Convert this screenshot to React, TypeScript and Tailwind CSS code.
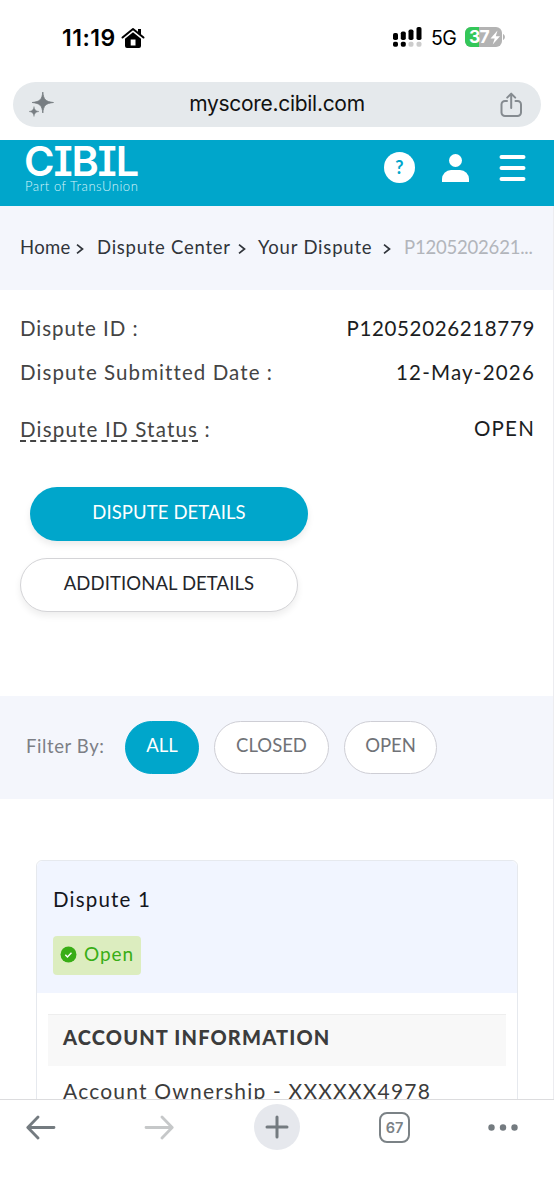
import React, { useState } from 'react';

const BREADCRUMBS = [
  { label: 'Home', className: 'w-[50px] tracking-[0.3px]', gap: 'ml-1.5 mr-[13px]' },
  { label: 'Dispute Center', className: 'w-[135px] tracking-[0.75px]', gap: 'ml-1.5 mr-3' },
  { label: 'Your Dispute', className: 'w-[115px] tracking-[0.8px]', gap: 'ml-2.5 mr-[13px]' },
];

const FILTERS = [
  { id: 'all', label: 'ALL', width: 'w-[74px]' },
  { id: 'closed', label: 'CLOSED', width: 'w-[115px]' },
  { id: 'open', label: 'OPEN', width: 'w-[93px]' },
];

function StatusBar() {
  return (
    <div className="flex h-[82px] shrink-0 items-start pt-[25px] pl-[62px] font-['Inter','Liberation_Sans',sans-serif] text-black">
      <span className="w-[54px] text-[23px] leading-[26px] font-semibold tracking-[0.5px] whitespace-nowrap">11:19</span>
      <svg className="mt-[2px] ml-[5px]" width="24" height="22" viewBox="0 0 24 22">
        <path d="M1.5 10.5 12 2l10.5 8.5" fill="none" stroke="#000" strokeWidth="2" strokeLinecap="round" strokeLinejoin="round" />
        <path d="M17 2h3v6l-3-2.6z" />
        <path fillRule="evenodd" d="M4 11.800 12 5.300l8 6.500V19a2 2 0 0 1-2 2H6a2 2 0 0 1-2-2zM9.700 12.500v6h4.800v-6z" />
      </svg>
      <svg className="mt-[2px] ml-[248px]" width="29" height="21" viewBox="0 0 29 21">
        <rect x="0" y="6" width="5" height="7" rx="1.800" />
        <rect x="7.800" y="4.500" width="5" height="8.500" rx="1.800" />
        <rect x="15.500" y="2.500" width="5" height="10.500" rx="1.800" />
        <rect x="23.500" y="0" width="5" height="13" rx="1.800" />
        <rect x="0" y="14.800" width="5" height="5" rx="1.700" />
        <rect x="7.800" y="14.800" width="5" height="5" rx="1.700" />
        <rect x="15.500" y="14.800" width="5" height="5" rx="1.700" fill="#ccc" />
        <rect x="23.500" y="14.800" width="5" height="5" rx="1.700" fill="#ccc" />
      </svg>
      <span className="ml-[9px] w-[27px] text-[19.5px] leading-[27px] tracking-[-0.600px]">5G</span>
      <svg className="mt-[2px] ml-[7px]" width="41" height="21" viewBox="0 0 41 21">
        <clipPath id="battery">
          <rect width="37" height="20" rx="6" />
        </clipPath>
        <g clipPath="url(#battery)">
          <rect width="37" height="20" fill="#b3b3b3" />
          <rect width="14" height="20" fill="#34c759" />
        </g>
        <path d="M38 7c2.500.7 2.500 5.300 0 6z" fill="#b3b3b3" />
        <text x="4" y="16.300" fontSize="17.500" fontWeight="700" fill="#fff" letterSpacing="-0.8">37</text>
        <path d="m32.500 3.500-7 8h4.200l-2 6 7.300-8.200h-4.200z" fill="#fff" />
      </svg>
    </div>
  );
}

function AddressBar() {
  return (
    <div className="mx-[13px] flex h-[45px] shrink-0 items-center rounded-full bg-[#e5e9ec] pr-[18px] pl-4">
      <svg width="25" height="25" viewBox="0 0 25 25" fill="#777d82">
        <path d="M13.800 0c.8 7.600 2.800 9.600 10.700 10.500-7.900.9-9.900 2.900-10.700 10.500-.8-7.600-2.800-9.600-10.700-10.500C11 9.600 13 7.600 13.800 0z" stroke="#777d82" strokeWidth=".8" />
        <path d="M5 14.500c.5 3.300 1.500 4.300 5 5-3.500.7-4.500 1.700-5 5-.5-3.300-1.500-4.300-5-5 3.500-.7 4.500-1.700 5-5z" stroke="#777d82" strokeWidth=".4" />
      </svg>
      <span className="flex-1 pb-px text-center font-['Inter','Liberation_Sans',sans-serif] text-[21px] leading-[28px] tracking-[-0.3px] text-[#111]">
        myscore.cibil.com
      </span>
      <svg width="23" height="26" viewBox="0 0 23 26" fill="none" stroke="#858b90" strokeWidth="2" strokeLinecap="round" strokeLinejoin="round">
        <path d="M7 9H5a3.500 3.500 0 0 0-3.500 3.500v8A3.500 3.500 0 0 0 5 24h12.500a3.500 3.500 0 0 0 3.500-3.500v-8A3.500 3.500 0 0 0 17.500 9h-2" />
        <path d="M11.200 16V1.800M7.200 5.600l4-4 4 4" />
      </svg>
    </div>
  );
}

function SiteHeader() {
  return (
    <header className="mt-[13px] flex h-[66px] shrink-0 items-start bg-[#00a6cb] pl-[25px] text-white">
      <div className="w-[114px] whitespace-nowrap">
        <div className="mt-[3px] -ml-px h-[37px] font-['Inter',sans-serif] text-[41.500px] leading-[37px] font-semibold tracking-[-1.200px] [font-feature-settings:'cv08']">
          CIBIL
        </div>
        <div className="text-[13px] leading-[13px] font-light tracking-[0.550px] text-[#d9f5fb]">Part of TransUnion</div>
      </div>
      <div className="mt-[12px] ml-[245px] flex h-[31px] w-[31px] items-center justify-center rounded-full bg-white text-[18px] font-bold text-[#00a6cb]">
        ?
      </div>
      <svg className="mt-[14px] ml-[27px]" width="27" height="28" viewBox="0 0 27 28" fill="#fff">
        <circle cx="13.500" cy="6.500" r="6.500" />
        <path d="M0 28v-3a9 9 0 0 1 9-9h9a9 9 0 0 1 9 9v3z" />
      </svg>
      <svg className="mt-[14px] ml-[30px]" width="27" height="28" viewBox="0 0 27 28" stroke="#fff" strokeWidth="4" strokeLinecap="round">
        <path d="M2.500 3h22M2.500 14h22M2.500 25h22" />
      </svg>
    </header>
  );
}

function Chevron({ className }: { className: string }) {
  return (
    <svg className={`mt-[2px] shrink-0 ${className}`} width="8" height="10" viewBox="0 0 8 10" fill="none" stroke="#30343a" strokeWidth="1.700">
      <path d="m1 .7 5.500 4.300L1 9.300" />
    </svg>
  );
}

function DisputeCard() {
  return (
    <section className="mx-9 mr-[35px] mt-[61px] h-[260px] rounded-t-md border border-[#e6e9ee]">
      <div className="h-[132px] rounded-t-md bg-[#f1f5ff] pt-[24px] pl-4">
        <h2 className="text-[20.500px] leading-[28px] tracking-[1.200px] text-[#14161d]">Dispute 1</h2>
        <div className="mt-[23px] flex h-[39px] w-[88px] items-center rounded bg-[#dcedbf] pl-[7px] text-[#38ad16]">
          <svg className="-mt-[2px]" width="17" height="17" viewBox="0 0 16 16">
            <circle cx="8" cy="8" r="7.500" fill="#38ad16" />
            <path d="m5 8.300 2 2 3.800-4" fill="none" stroke="#fff" strokeWidth="1.300" />
          </svg>
          <span className="ml-[7px] pb-[3px] text-[19px] leading-[26px] tracking-[0.900px]">Open</span>
        </div>
      </div>
      <div className="px-[11px] pt-[21px]">
        <h3 className="h-[52px] border-t border-[#eee] bg-[#f8f8f8] pl-[15px] text-[20px] leading-[44px] font-black tracking-[1.150px] text-[#3c3c3c]">
          ACCOUNT INFORMATION
        </h3>
        <p className="pt-[12px] pl-[15px] text-[21px] leading-[26px] tracking-[1.200px] text-[#3c3c3c]">
          Account Ownership - XXXXXX4978
        </p>
      </div>
    </section>
  );
}

function BrowserToolbar() {
  return (
    <nav className="flex h-[101px] shrink-0 items-start border-t border-[#dcdcde] bg-white pt-[4px] pl-[26px]">
      <svg className="mt-[11px]" width="30" height="25" viewBox="0 0 30 25" fill="none" stroke="#747b80" strokeWidth="2.800" strokeLinecap="round" strokeLinejoin="round">
        <path d="M28 12.500H2M12 2 1.800 12.500 12 23" />
      </svg>
      <svg className="mt-[11px] ml-[88px]" width="30" height="25" viewBox="0 0 30 25" fill="none" stroke="#c6c8c9" strokeWidth="2.800" strokeLinecap="round" strokeLinejoin="round">
        <path d="M2 12.500h26M18 2l10.200 10.500L18 23" />
      </svg>
      <div className="ml-[80px] flex h-[46px] w-[46px] items-center justify-center rounded-full bg-[#e6e8ed]">
        <svg width="24" height="24" viewBox="0 0 24 24" stroke="#747b80" strokeWidth="3" strokeLinecap="round">
          <path d="M12 2v20M2 12h20" />
        </svg>
      </div>
      <div className="mt-[8px] ml-[79px] flex h-[31px] w-[31px] items-center justify-center rounded-[8px] border-2 border-[#7b8286] font-['Inter',sans-serif] text-[14.500px] font-semibold text-[#7b8286]">
        67
      </div>
      <svg className="mt-[20px] ml-[78px]" width="30" height="7" viewBox="0 0 30 7" fill="#747b80">
        <circle cx="3.500" cy="3.500" r="3.200" />
        <circle cx="15" cy="3.500" r="3.200" />
        <circle cx="26.500" cy="3.500" r="3.200" />
      </svg>
    </nav>
  );
}

function App() {
  const [filter, setFilter] = useState('all');

  return (
    <div className="flex h-[1200px] w-[554px] flex-col overflow-hidden bg-white font-['Lato','Liberation_Sans',sans-serif]">
      <StatusBar />
      <AddressBar />
      <SiteHeader />
      <main className="min-h-0 flex-1 overflow-hidden border-r border-[#ececf0]">
        <div className="flex h-[84px] items-center bg-[#f4f6fc] pb-px pl-5 text-[18.500px] whitespace-nowrap text-[#30343a]">
          {BREADCRUMBS.map((crumb) => (
            <React.Fragment key={crumb.label}>
              <a className={crumb.className}>{crumb.label}</a>
              <Chevron className={crumb.gap} />
            </React.Fragment>
          ))}
          <span className="tracking-[-0.200px] text-[#b2b5bb]">P1205202621...</span>
        </div>

        <dl className="h-[197px] px-5 pr-[18px] pt-[24px] text-[20.500px] leading-[28px] whitespace-nowrap text-[#444]">
          <div className="flex h-[44px] justify-between">
            <dt className="tracking-[0.950px]">Dispute ID :</dt>
            <dd className="tracking-[0.650px] text-[#1b1d22]">P12052026218779</dd>
          </div>
          <div className="flex h-[57px] justify-between">
            <dt className="tracking-[1.080px]">Dispute Submitted Date :</dt>
            <dd className="tracking-[1.200px] text-[#1b1d22]">12-May-2026</dd>
          </div>
          <div className="flex justify-between">
            <dt className="tracking-[1.200px]">
              <span className="inline-block h-[27px] border-b-2 border-dashed border-[#444]">Dispute ID Status</span> :
            </dt>
            <dd className="-mt-px tracking-[1.200px] text-[#1b1d22]">OPEN</dd>
          </div>
        </dl>

        <div className="flex h-[209px] flex-col items-start gap-[17px] pl-5">
          <button className="ml-[10px] h-[54px] w-[278px] rounded-full bg-[#00a6cb] pb-[3px] text-[18.500px] tracking-[0.100px] text-white shadow-[0_4px_7px_rgba(0,0,0,0.08)]">
            DISPUTE DETAILS
          </button>
          <button className="h-[54px] w-[278px] rounded-full border border-[#d4d4d7] bg-white pb-[3px] text-[18.500px] tracking-[0.100px] text-[#24262b] shadow-[0_4px_7px_rgba(0,0,0,0.07)]">
            ADDITIONAL DETAILS
          </button>
        </div>

        <div className="flex h-[103px] items-center bg-[#f4f6fc] pl-[26px]">
          <span className="w-[99px] pb-[2px] text-[18.500px] tracking-[0.600px] text-[#7c7f86]">Filter By:</span>
          <div className="flex gap-[15px]">
            {FILTERS.map((item) => (
              <button
                key={item.id}
                onClick={() => setFilter(item.id)}
                className={`h-[53px] rounded-full border pb-[3px] text-[18.500px] ${item.width} ${
                  filter === item.id ? 'border-[#00a6cb] bg-[#00a6cb] text-white' : 'border-[#ceced5] bg-white text-[#707277]'
                }`}
              >
                {item.label}
              </button>
            ))}
          </div>
        </div>

        <DisputeCard />
      </main>
      <BrowserToolbar />
    </div>
  );
}

export default App;
